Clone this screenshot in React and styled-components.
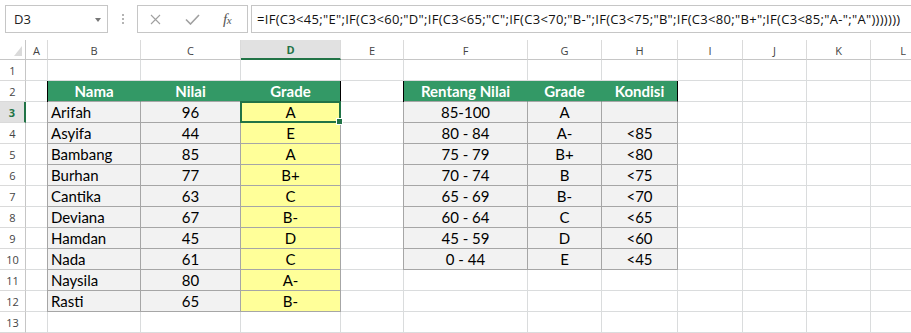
import React from "react";
import styled, { createGlobalStyle, css } from "styled-components";

const GlobalStyle = createGlobalStyle`
  html, body {
    margin: 0;
    padding: 0;
    background: #ffffff;
    overflow: hidden;
  }
  body {
    font-family: "Open Sans", "Liberation Sans", sans-serif;
  }
`;

const GRID = "#dadcdd";
const TABLE = "#a6a6a6";
const HEAD_GREEN = "#339966";
const SEL_GREEN = "#217346";

const COLS = ["A", "B", "C", "D", "E", "F", "G", "H", "I", "J", "K", "L"];
const WIDTHS = [26, 22, 93, 100, 100, 63, 124, 74, 76, 65, 64, 64, 65];

const FORMULA =
  '=IF(C3<45;"E";IF(C3<60;"D";IF(C3<65;"C";IF(C3<70;"B-";IF(C3<75;"B";IF(C3<80;"B+";IF(C3<85;"A-";"A")))))))';

const students = [
  ["Arifah", 96, "A"],
  ["Asyifa", 44, "E"],
  ["Bambang", 85, "A"],
  ["Burhan", 77, "B+"],
  ["Cantika", 63, "C"],
  ["Deviana", 67, "B-"],
  ["Hamdan", 45, "D"],
  ["Nada", 61, "C"],
  ["Naysila", 80, "A-"],
  ["Rasti", 65, "B-"],
];

const ranges = [
  ["85-100", "A", ""],
  ["80 - 84", "A-", "<85"],
  ["75 - 79", "B+", "<80"],
  ["70 - 74", "B", "<75"],
  ["65 - 69", "B-", "<70"],
  ["60 - 64", "C", "<65"],
  ["45 - 59", "D", "<60"],
  ["0 - 44", "E", "<45"],
];

const Window = styled.div`
  width: 911px;
  height: 333px;
  display: flex;
  flex-direction: column;
  overflow: hidden;
  background: #fff;
`;

const FormulaBar = styled.div`
  height: 41px;
  display: flex;
  align-items: flex-start;
  padding-top: 5px;
  padding-left: 5px;
  box-sizing: border-box;
`;

const NameBox = styled.div`
  width: 103px;
  height: 28px;
  box-sizing: border-box;
  border: 1px solid #c6c6c6;
  display: flex;
  align-items: center;
  justify-content: space-between;
  padding: 0 6px 0 8px;
  font-size: 13px;
  color: #222;
`;

const DropArrow = styled.span`
  width: 0;
  height: 0;
  border-left: 3.5px solid transparent;
  border-right: 3.5px solid transparent;
  border-top: 4px solid #777;
  margin-top: 1px;
`;

const Grip = styled.div`
  width: 30px;
  height: 28px;
  display: flex;
  flex-direction: column;
  align-items: center;
  justify-content: center;
  gap: 2px;
  span {
    width: 2px;
    height: 2px;
    background: #b4b4b4;
  }
`;

const FxBox = styled.div`
  width: 111px;
  height: 28px;
  box-sizing: border-box;
  border: 1px solid #c6c6c6;
  display: flex;
  align-items: center;
  padding-left: 12px;
  gap: 24px;
  margin-left: -1px;
`;

const FxText = styled.span`
  font-family: "Liberation Serif", "DejaVu Serif", serif;
  font-style: italic;
  font-size: 15px;
  color: #555;
  letter-spacing: -0.5px;
  margin-left: -1px;
  sub {
    font-size: 11px;
    vertical-align: 0;
  }
`;

const FormulaInput = styled.div`
  flex: 1;
  height: 28px;
  box-sizing: border-box;
  margin-left: 3px;
  border: 1px solid #c6c6c6;
  border-right: none;
  display: flex;
  align-items: center;
  padding-left: 5px;
  font-size: 13px;
  letter-spacing: 0.3px;
  color: #111;
  white-space: nowrap;
  overflow: hidden;
`;

const Sheet = styled.div`
  display: grid;
  grid-template-columns: ${WIDTHS.map((w) => `${w}px`).join(" ")};
  grid-template-rows: 20px repeat(13, 21px);
  width: max-content;
`;

const Corner = styled.div`
  border-right: 1px solid #c6c6c6;
  border-bottom: 1px solid #c6c6c6;
  display: flex;
  align-items: flex-end;
  justify-content: flex-end;
  padding: 0 3px 3px 0;
`;

const ColHead = styled.div`
  box-sizing: border-box;
  border-right: 1px solid #dadada;
  border-bottom: ${(p) => (p.$active ? `2px solid ${SEL_GREEN}` : "1px solid #c6c6c6")};
  background: ${(p) => (p.$active ? "#e1e1e1" : "#fff")};
  color: ${(p) => (p.$active ? SEL_GREEN : "#444")};
  font-weight: ${(p) => (p.$active ? 700 : 400)};
  font-size: 11px;
  display: flex;
  align-items: center;
  justify-content: center;
  padding-top: 1px;
`;

const RowHead = styled.div`
  box-sizing: border-box;
  border-right: ${(p) => (p.$active ? `2px solid ${SEL_GREEN}` : "1px solid #c6c6c6")};
  border-bottom: 1px solid #dadada;
  background: ${(p) => (p.$active ? "#e1e1e1" : "#fff")};
  color: ${(p) => (p.$active ? SEL_GREEN : "#444")};
  font-weight: ${(p) => (p.$active ? 700 : 400)};
  font-size: 11px;
  display: flex;
  align-items: center;
  justify-content: center;
  padding-top: 1px;
`;

const fills = {
  none: "#ffffff",
  head: HEAD_GREEN,
  grey: "#f2f2f2",
  yellow: "#ffff99",
};

const Cell = styled.div`
  position: relative;
  box-sizing: border-box;
  border-right: 1px solid ${(p) => p.$br || GRID};
  border-bottom: 1px solid ${(p) => p.$bb || GRID};
  background: ${(p) => fills[p.$fill || "none"]};
  ${(p) =>
    p.$edge &&
    css`
      box-shadow: -1px 0 0 ${p.$edge};
    `}
  font-family: "Lato", "Carlito", "Liberation Sans", sans-serif;
  font-size: 15px;
  font-weight: ${(p) => (p.$bold ? 700 : 400)};
  color: ${(p) => (p.$fill === "head" ? "#fff" : "#000")};
  text-align: ${(p) => p.$align || "left"};
  padding: 0 3px;
  line-height: 20px;
  white-space: nowrap;
`;

const Selection = styled.div`
  position: absolute;
  z-index: 2;
  left: -1px;
  top: -1px;
  right: -1px;
  bottom: -1px;
  border: 2px solid ${SEL_GREEN};
  pointer-events: none;
  &::after {
    content: "";
    position: absolute;
    right: -4px;
    bottom: -4px;
    width: 5px;
    height: 5px;
    background: ${SEL_GREEN};
    border: 1px solid #fff;
  }
`;

function cellFor(row, col) {
  // col: 0 = A ... 11 = L
  const left = col >= 1 && col <= 3 && row >= 2 && row <= 12;
  const right = col >= 5 && col <= 7 && row >= 2 && row <= 10;
  if (!left && !right) return { text: "" };

  const first = left ? 1 : 5;
  const last = left ? 3 : 7;
  const edge = col === first;

  if (row === 2) {
    const heads = left ? ["Nama", "Nilai", "Grade"] : ["Rentang Nilai", "Grade", "Kondisi"];
    return {
      text: heads[col - first],
      fill: "head",
      bold: true,
      align: "center",
      br: col === last ? "#000" : HEAD_GREEN,
      bb: TABLE,
      edge: edge ? "#000" : null,
    };
  }

  let text;
  let fill = "grey";
  let align = "center";
  if (left) {
    const s = students[row - 3];
    text = s[col - 1];
    if (col === 1) align = "left";
    if (col === 3) fill = "yellow";
  } else {
    text = ranges[row - 3][col - 5];
  }
  return { text, fill, align, br: TABLE, bb: TABLE, edge: edge ? TABLE : null };
}

function XIcon() {
  return (
    <svg width="11" height="11" viewBox="0 0 11 11">
      <path d="M1 1 L10 10 M10 1 L1 10" stroke="#a0a0a0" strokeWidth="1.1" fill="none" />
    </svg>
  );
}

function CheckIcon() {
  return (
    <svg width="15" height="11" viewBox="0 0 15 11">
      <path d="M1 5.5 L5.5 10 L14 1" stroke="#a0a0a0" strokeWidth="1.6" fill="none" />
    </svg>
  );
}

function CornerMark() {
  return (
    <svg width="8" height="10" viewBox="0 0 8 10">
      <path d="M8 0 L8 10 L0 10 Z" fill="#dadada" />
    </svg>
  );
}

export default function App() {
  const rows = Array.from({ length: 13 }, (_, i) => i + 1);
  return (
    <>
      <GlobalStyle />
      <Window>
        <FormulaBar>
          <NameBox>
            <span>D3</span>
            <DropArrow />
          </NameBox>
          <Grip>
            <span />
            <span />
            <span />
          </Grip>
          <FxBox>
            <XIcon />
            <CheckIcon />
            <FxText>
              f<sub>x</sub>
            </FxText>
          </FxBox>
          <FormulaInput>{FORMULA}</FormulaInput>
        </FormulaBar>
        <Sheet>
          <Corner>
            <CornerMark />
          </Corner>
          {COLS.map((c) => (
            <ColHead key={c} $active={c === "D"}>
              {c}
            </ColHead>
          ))}
          {rows.map((r) => (
            <React.Fragment key={r}>
              <RowHead $active={r === 3}>{r}</RowHead>
              {COLS.map((c, ci) => {
                const d = cellFor(r, ci);
                return (
                  <Cell
                    key={c}
                    $fill={d.fill}
                    $bold={d.bold}
                    $align={d.align}
                    $br={d.br}
                    $bb={d.bb}
                    $edge={d.edge}
                  >
                    {d.text}
                    {r === 3 && c === "D" && <Selection />}
                  </Cell>
                );
              })}
            </React.Fragment>
          ))}
        </Sheet>
      </Window>
    </>
  );
}
